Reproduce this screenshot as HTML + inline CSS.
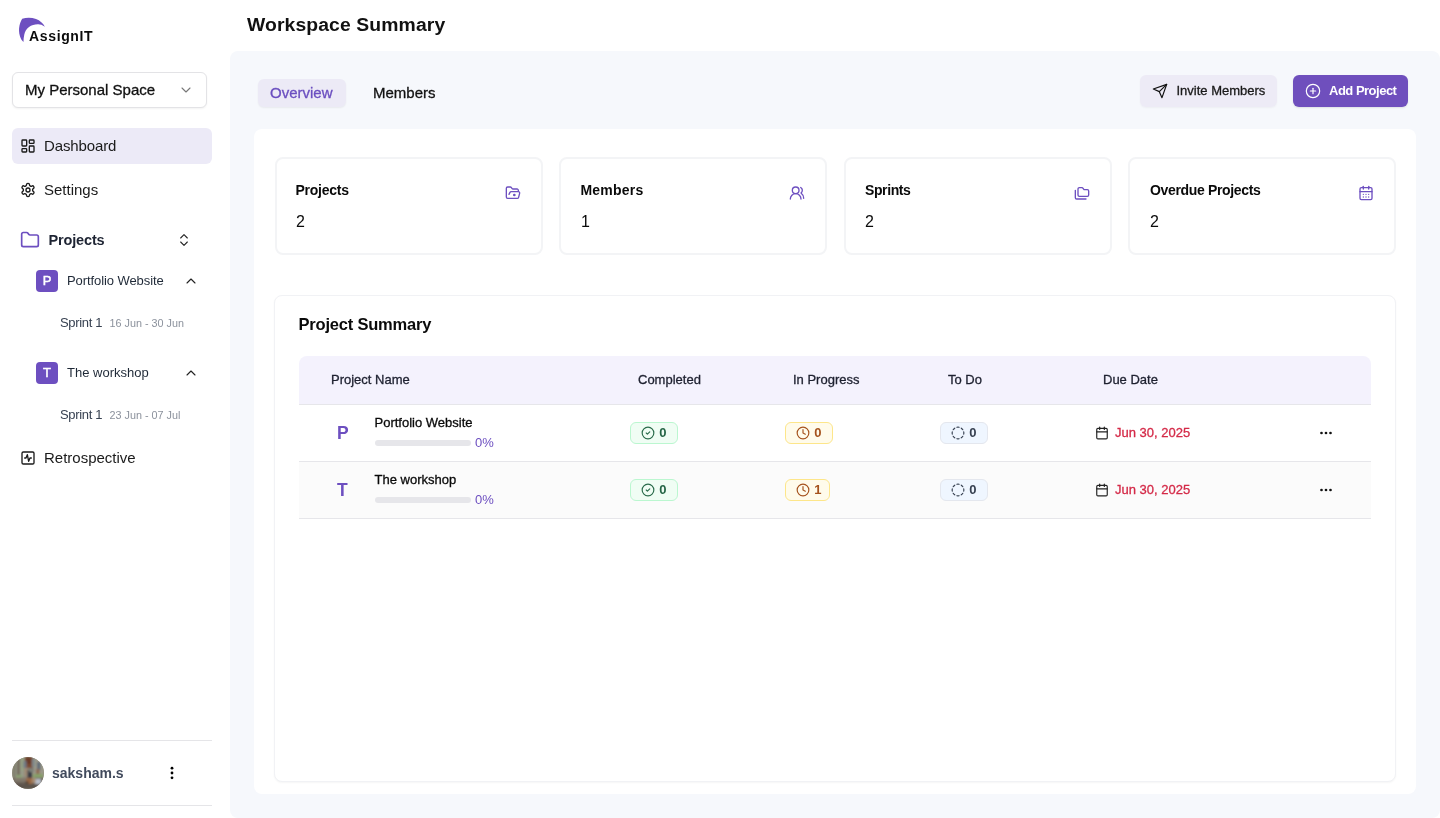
<!DOCTYPE html>
<html lang="en">
<head>
<meta charset="utf-8">
<title>Workspace Summary</title>
<style>
*{box-sizing:border-box;margin:0;padding:0}
html,body{width:1440px;height:818px;overflow:hidden;background:#fff;font-family:"Liberation Sans",sans-serif;color:#0a0a0a}
.abs{position:absolute}
#sidebar{will-change:transform;position:absolute;left:0;top:0;width:230px;height:818px;background:#fff}
#main{position:absolute;left:230px;top:51px;width:1210px;height:767px;background:#f6f8fc;border-radius:8px}
#title{will-change:transform;position:absolute;left:246.5px;top:12.5px;font-size:18px;letter-spacing:0.1px;transform:scaleX(1.075);transform-origin:0 0;font-weight:700;line-height:24px;color:#111;white-space:nowrap}
svg{display:block}
.t{position:absolute;white-space:nowrap;line-height:1}

.stat{top:157px;width:268px;height:98px;border:2px solid #f3f4f6;border-radius:8px;background:#fff}
.sl{top:183.15px;font-size:14px;font-weight:700;color:#0a0a0a}
.sv{top:214px;font-size:16px;color:#0a0a0a}
.ic{fill:none;stroke:#6d4fc0;stroke-width:2;stroke-linecap:round;stroke-linejoin:round}
.th{top:373px;font-size:13px;color:#1e2130}
.bdg{height:22px;border-radius:6px;border:1px solid}
.bi{fill:none;stroke-width:2;stroke-linecap:round;stroke-linejoin:round}
.bn{font-size:13px;font-weight:700}
.m{-webkit-text-stroke:0.3px currentColor}
</style>
</head>
<body>
<div id="sidebar">
  <!-- logo -->
  <svg class="abs" style="left:17px;top:16px" width="32" height="30" viewBox="0 0 32 30"><path d="M5.2 2.7C9.500 1.300 14.500 1.300 19 2.900C23 4.300 26.200 7.300 27.900 10.700C25.500 8.900 23 8.100 20.800 8.200C17.500 8.300 14.500 9.200 12 11C9.500 12.900 8 15.500 7.300 18.500C6.700 21 6.500 23.500 6.500 26C4.800 24.500 3.600 22.500 2.900 20C1.900 16.500 1.700 13 2.500 9.500C3 7 4 4.600 5.200 2.700Z" fill="#6d4fc0"/></svg>
  <div class="t" id="logotext" style="left:29px;top:28.6px;font-size:14px;font-weight:700;color:#0b0b0b;letter-spacing:0.65px">AssignIT</div>

  <!-- select -->
  <div class="abs" style="left:12px;top:72px;width:195px;height:36px;border:1px solid #e3e3e6;border-radius:6px;box-shadow:0 1px 2px rgba(0,0,0,.05);background:#fff"></div>
  <div class="t m" style="left:25px;top:82px;font-size:15px;color:#111">My Personal Space</div>
  <svg class="abs" style="left:178px;top:82px" width="16" height="16" viewBox="0 0 24 24" fill="none" stroke="#777" stroke-width="1.600" stroke-linecap="round" stroke-linejoin="round"><path d="M6 9l6 6 6-6"/></svg>

  <!-- nav -->
  <div class="abs" style="left:12px;top:128px;width:200px;height:36px;border-radius:6px;background:#eceaf7"></div>
  <svg class="abs" style="left:20px;top:138px" width="16" height="16" viewBox="0 0 24 24" fill="none" stroke="#1a1a1a" stroke-width="2" stroke-linecap="round" stroke-linejoin="round"><rect x="3" y="3" width="7" height="9" rx="1"/><rect x="14" y="3" width="7" height="5" rx="1"/><rect x="14" y="12" width="7" height="9" rx="1"/><rect x="3" y="16" width="7" height="5" rx="1"/></svg>
  <div class="t" style="left:44px;top:138px;font-size:15px;letter-spacing:-0.12px;color:#1a1a1a">Dashboard</div>

  <svg class="abs" style="left:20px;top:182px" width="16" height="16" viewBox="0 0 24 24" fill="none" stroke="#1a1a1a" stroke-width="2" stroke-linecap="round" stroke-linejoin="round"><path d="M12.22 2h-.44a2 2 0 0 0-2 2v.18a2 2 0 0 1-1 1.73l-.43.25a2 2 0 0 1-2 0l-.15-.08a2 2 0 0 0-2.73.73l-.22.38a2 2 0 0 0 .73 2.73l.15.1a2 2 0 0 1 1 1.72v.51a2 2 0 0 1-1 1.74l-.15.09a2 2 0 0 0-.73 2.73l.22.38a2 2 0 0 0 2.73.73l.15-.08a2 2 0 0 1 2 0l.43.25a2 2 0 0 1 1 1.73V20a2 2 0 0 0 2 2h.44a2 2 0 0 0 2-2v-.18a2 2 0 0 1 1-1.73l.43-.25a2 2 0 0 1 2 0l.15.08a2 2 0 0 0 2.73-.73l.22-.39a2 2 0 0 0-.73-2.73l-.15-.08a2 2 0 0 1-1-1.74v-.5a2 2 0 0 1 1-1.74l.15-.09a2 2 0 0 0 .73-2.73l-.22-.38a2 2 0 0 0-2.73-.73l-.15.08a2 2 0 0 1-2 0l-.43-.25a2 2 0 0 1-1-1.73V4a2 2 0 0 0-2-2z"/><circle cx="12" cy="12" r="3"/></svg>
  <div class="t" style="left:44px;top:182px;font-size:15px;color:#1a1a1a">Settings</div>

  <!-- projects -->
  <svg class="abs" style="left:20px;top:230px" width="20" height="20" viewBox="0 0 24 24" fill="none" stroke="#6d4fc0" stroke-width="2" stroke-linecap="round" stroke-linejoin="round"><path d="M20 20a2 2 0 0 0 2-2V8a2 2 0 0 0-2-2h-7.9a2 2 0 0 1-1.69-.9L9.6 3.9A2 2 0 0 0 7.93 3H4a2 2 0 0 0-2 2v13a2 2 0 0 0 2 2Z"/></svg>
  <div class="t" style="left:48.5px;top:232.5px;font-size:14.5px;letter-spacing:-0.15px;font-weight:700;color:#1e2433">Projects</div>
  <svg class="abs" style="left:176px;top:232px" width="16" height="16" viewBox="0 0 24 24" fill="none" stroke="#222" stroke-width="1.6" stroke-linecap="round" stroke-linejoin="round"><path d="M7 15l5 5 5-5"/><path d="M7 9l5-5 5 5"/></svg>

  <div class="abs" style="left:36px;top:270px;width:22px;height:22px;border-radius:4px;background:#6d4fc0"></div>
  <div class="t" style="left:36px;top:274px;width:22px;text-align:center;font-size:13px;-webkit-text-stroke:0.45px #fff;color:#fff">P</div>
  <div class="t" style="left:67px;top:274px;font-size:13px;letter-spacing:-0.08px;color:#1f2937">Portfolio Website</div>
  <svg class="abs" style="left:183px;top:273px" width="16" height="16" viewBox="0 0 24 24" fill="none" stroke="#222" stroke-width="1.700" stroke-linecap="round" stroke-linejoin="round"><path d="M18 15l-6-6-6 6"/></svg>
  <div class="t" style="left:60px;top:316.0px;font-size:13px;letter-spacing:-0.32px;color:#374151">Sprint 1</div>
  <div class="t" style="left:109.5px;top:318px;font-size:10.8px;color:#8b919c">16 Jun - 30 Jun</div>

  <div class="abs" style="left:36px;top:362px;width:22px;height:22px;border-radius:4px;background:#6d4fc0"></div>
  <div class="t" style="left:36px;top:366px;width:22px;text-align:center;font-size:13px;-webkit-text-stroke:0.45px #fff;color:#fff">T</div>
  <div class="t" style="left:67px;top:366px;font-size:13px;color:#1f2937">The workshop</div>
  <svg class="abs" style="left:183px;top:365px" width="16" height="16" viewBox="0 0 24 24" fill="none" stroke="#222" stroke-width="1.700" stroke-linecap="round" stroke-linejoin="round"><path d="M18 15l-6-6-6 6"/></svg>
  <div class="t" style="left:60px;top:408px;font-size:13px;letter-spacing:-0.32px;color:#374151">Sprint 1</div>
  <div class="t" style="left:109.5px;top:410px;font-size:10.8px;color:#8b919c">23 Jun - 07 Jul</div>

  <svg class="abs" style="left:20px;top:450px" width="16" height="16" viewBox="0 0 24 24" fill="none" stroke="#1a1a1a" stroke-width="2" stroke-linecap="round" stroke-linejoin="round"><rect x="3" y="3" width="18" height="18" rx="2"/><path d="M17 12h-2l-2 5-2-10-2 5H7"/></svg>
  <div class="t" style="left:44px;top:450px;font-size:15px;color:#1a1a1a">Retrospective</div>

  <!-- user -->
  <div class="abs" style="left:12px;top:740px;width:200px;height:1px;background:#e5e5e8"></div>
  <div class="abs" style="left:12px;top:805px;width:200px;height:1px;background:#e5e5e8"></div>
  <svg class="abs" id="avatar" style="left:12px;top:757px" width="32" height="32" viewBox="0 0 32 32">
    <defs><clipPath id="avc"><circle cx="16" cy="16" r="16"/></clipPath><filter id="avb" x="-20%" y="-20%" width="140%" height="140%"><feGaussianBlur stdDeviation="1.1"/></filter></defs>
    <g clip-path="url(#avc)"><rect width="32" height="32" fill="#8f8a7a"/><g filter="url(#avb)">
      <rect x="0" y="0" width="12" height="20" fill="#979a88"/>
      <rect x="5" y="2" width="3" height="18" fill="#736b5c"/>
      <rect x="1" y="6" width="2.500" height="14" fill="#7d7868"/>
      <rect x="9" y="0" width="3" height="14" fill="#94a082"/>
      <rect x="21" y="0" width="11" height="20" fill="#9c9a8a"/>
      <rect x="13" y="0" width="8" height="11" fill="#7b4b33"/>
      <rect x="14" y="0" width="5" height="7" fill="#6b3a25"/>
      <rect x="11.500" y="4" width="3" height="7" fill="#6f7a88"/>
      <rect x="20" y="2" width="3" height="8" fill="#7f8a8c"/>
      <rect x="25" y="5" width="3.500" height="8" fill="#5d6b78"/>
      <rect x="12.500" y="11" width="3" height="8" fill="#a08a74"/>
      <rect x="24" y="12" width="3.500" height="7" fill="#8d6b52"/>
      <rect x="15.500" y="13" width="4.500" height="8" fill="#3b3e44"/>
      <rect x="17" y="11" width="5" height="4" fill="#7d8078"/>
      <rect x="21" y="17" width="10" height="3.500" fill="#86a068"/>
      <rect x="4" y="18" width="6" height="2.500" fill="#8aa272"/>
      <rect x="0" y="21" width="32" height="11" fill="#675d54"/>
      <rect x="2" y="21" width="12" height="4" fill="#80776b"/>
      <rect x="14" y="21" width="6" height="6" fill="#9a6945"/>
      <rect x="13.500" y="24" width="3" height="3" fill="#5a4638"/>
      <rect x="23" y="22" width="6" height="5" fill="#b9bfca"/>
      <rect x="20" y="21" width="3.500" height="5" fill="#a58a70"/>
      <rect x="6" y="27" width="20" height="5" fill="#5c534b"/>
    </g></g></svg>
  <div class="t" style="left:52px;top:766.3px;font-size:14px;font-weight:700;color:#414a5c">saksham.s</div>
  <svg class="abs" style="left:164px;top:765px" width="16" height="16" viewBox="0 0 24 24" fill="#000"><circle cx="12" cy="4.700" r="2.100"/><circle cx="12" cy="12" r="2.100"/><circle cx="12" cy="19.300" r="2.100"/></svg>
</div>

<div id="title">Workspace Summary</div>

<div id="main">
</div>
<div id="content" style="will-change:transform;position:absolute;left:0;top:0;width:1440px;height:818px">
  <!-- tabs -->
  <div class="abs" style="left:258px;top:79px;width:88px;height:28px;border-radius:6px;background:#eceaf6;box-shadow:0 1px 2px rgba(0,0,0,.06)"></div>
  <div class="t m" id="tab1" style="left:270px;top:85px;font-size:15px;color:#6b4fc0">Overview</div>
  <div class="t m" id="tab2" style="left:373px;top:85px;font-size:15px;color:#111">Members</div>

  <!-- buttons -->
  <div class="abs" style="left:1140px;top:75px;width:137px;height:32px;border-radius:6px;background:#edebf6;box-shadow:0 1px 2px rgba(0,0,0,.04)"></div>
  <svg class="abs" style="left:1152px;top:83px" width="16" height="16" viewBox="0 0 24 24" fill="none" stroke="#111" stroke-width="1.8" stroke-linecap="round" stroke-linejoin="round"><path d="M22 2L11 13"/><path d="M22 2l-7 20-4-9-9-4 20-7z"/></svg>
  <div class="t m" id="btn1" style="left:1176.5px;top:84px;font-size:13px;color:#1a1a1a">Invite Members</div>
  <div class="abs" style="left:1293px;top:75px;width:115px;height:32px;border-radius:6px;background:#6f4fbd;box-shadow:0 1px 2px rgba(0,0,0,.1)"></div>
  <svg class="abs" style="left:1305px;top:83px" width="16" height="16" viewBox="0 0 24 24" fill="none" stroke="#fff" stroke-width="1.8" stroke-linecap="round" stroke-linejoin="round"><circle cx="12" cy="12" r="10"/><path d="M8 12h8"/><path d="M12 8v8"/></svg>
  <div class="t" id="btn2" style="left:1329px;top:84px;font-size:13px;letter-spacing:-0.5px;font-weight:700;color:#fff">Add Project</div>

  <!-- white card -->
  <div class="abs" style="left:254px;top:129px;width:1162px;height:665px;border-radius:8px;background:#fff"></div>

  <!-- stat cards -->
  <div class="abs stat" style="left:275px"></div>
  <div class="abs stat" style="left:559px"></div>
  <div class="abs stat" style="left:844px"></div>
  <div class="abs stat" style="left:1128px"></div>

  <div class="t sl" style="left:295.5px;letter-spacing:-0.26px">Projects</div><div class="t sv" style="left:296px">2</div>
  <div class="t sl" style="left:580.5px;letter-spacing:0.2px">Members</div><div class="t sv" style="left:581px">1</div>
  <div class="t sl" style="left:865px;letter-spacing:-0.4px">Sprints</div><div class="t sv" style="left:865px">2</div>
  <div class="t sl" style="left:1150px;letter-spacing:-0.34px">Overdue Projects</div><div class="t sv" style="left:1150px">2</div>

  <svg class="abs ic" style="left:505px;top:185px" width="16" height="16" viewBox="0 0 24 24"><path d="m6 14 1.450-2.900A2 2 0 0 1 9.240 10H20a2 2 0 0 1 1.940 2.500l-1.550 6a2 2 0 0 1-1.940 1.500H4a2 2 0 0 1-2-2V5c0-1.100.9-2 2-2h3.930a2 2 0 0 1 1.660.9l.82 1.200a2 2 0 0 0 1.660.9H18a2 2 0 0 1 2 2v2"/><circle cx="14" cy="15" r="1" fill="#6d4fc0"/></svg>
  <svg class="abs ic" style="left:789px;top:185px" width="16" height="16" viewBox="0 0 24 24"><path d="M18 21a8 8 0 0 0-16 0"/><circle cx="10" cy="8" r="5"/><path d="M22 20c0-3.370-2-6.500-4-8a5 5 0 0 0-.45-8.300"/></svg>
  <svg class="abs ic" style="left:1074px;top:185px" width="16" height="16" viewBox="0 0 24 24"><path d="M20 17a2 2 0 0 0 2-2V9a2 2 0 0 0-2-2h-3.900a2 2 0 0 1-1.690-.9l-.81-1.200a2 2 0 0 0-1.670-.9H8a2 2 0 0 0-2 2v9a2 2 0 0 0 2 2Z"/><path d="M2 8v11a2 2 0 0 0 2 2h14"/></svg>
  <svg class="abs ic" style="left:1358px;top:185px" width="16" height="16" viewBox="0 0 24 24"><path d="M8 2v4"/><path d="M16 2v4"/><rect x="3" y="4" width="18" height="18" rx="2"/><path d="M3 10h18"/><path d="M8 14h.01"/><path d="M12 14h.01"/><path d="M16 14h.01"/><path d="M8 18h.01"/><path d="M12 18h.01"/><path d="M16 18h.01"/></svg>

  <!-- project summary card -->
  <div class="abs" style="left:274px;top:295px;width:1122px;height:487px;border:1px solid #f1f2f5;border-radius:8px;background:#fff;box-shadow:0 1px 2px rgba(0,0,0,.04)"></div>
  <div class="t" id="ps" style="left:298.5px;top:316.2px;font-size:16.5px;letter-spacing:-0.2px;font-weight:700;color:#0a0a0a">Project Summary</div>

  <div class="abs" style="left:299px;top:356px;width:1072px;height:49px;background:#f4f2fd;border-radius:8px 8px 0 0;border-bottom:1px solid #e6e6ea"></div>
  <div class="t m th" style="left:331px">Project Name</div>
  <div class="t m th" style="left:638px">Completed</div>
  <div class="t m th" style="left:793px">In Progress</div>
  <div class="t m th" style="left:948px">To Do</div>
  <div class="t m th" style="left:1103px">Due Date</div>

  <div class="abs" style="left:299px;top:405px;width:1072px;height:57px;background:#fff;border-bottom:1px solid #e6e6ea"></div>
  <div class="abs" style="left:299px;top:462px;width:1072px;height:57px;background:#fbfbfb;border-bottom:1px solid #e6e6ea"></div>

  <div class="t" style="left:337px;top:424.8px;font-size:17.5px;font-weight:700;color:#6d4fc0">P</div>
  <div class="t m pn" style="left:374.5px;top:416px;font-size:13px;color:#0a0a0a">Portfolio Website</div>
  <div class="abs" style="left:375px;top:440px;width:96px;height:6px;border-radius:3px;background:#e6e6ea"></div>
  <div class="t" style="left:475px;top:436px;font-size:13px;color:#6d4fc0">0%</div>

  <div class="abs bdg" style="left:630px;top:422px;width:48px;background:#f0fdf4;border-color:#bbf7d0"></div>
  <svg class="abs bi" style="left:641px;top:426px;stroke:#2a6b4b" width="14" height="14" viewBox="0 0 24 24"><circle cx="12" cy="12" r="10"/><path d="m9 12 2 2 4-4"/></svg>
  <div class="t bn" style="left:659.3px;top:426px;color:#256546">0</div>

  <div class="abs bdg" style="left:785px;top:422px;width:48px;background:#fffbeb;border-color:#fde68a"></div>
  <svg class="abs bi" style="left:796px;top:426px;stroke:#a5521d" width="14" height="14" viewBox="0 0 24 24"><circle cx="12" cy="12" r="10"/><path d="M12 6v6l4 2"/></svg>
  <div class="t bn" style="left:814.3px;top:426px;color:#a5521d">0</div>

  <div class="abs bdg" style="left:940px;top:422px;width:48px;background:#eff6ff;border-color:#e4e7ee"></div>
  <svg class="abs bi" style="left:951px;top:426px;stroke:#374151" width="14" height="14" viewBox="0 0 24 24"><path d="M10.100 2.182a10 10 0 0 1 3.800 0"/><path d="M13.900 21.818a10 10 0 0 1-3.800 0"/><path d="M17.609 3.721a10 10 0 0 1 2.690 2.700"/><path d="M2.182 13.900a10 10 0 0 1 0-3.800"/><path d="M20.279 17.609a10 10 0 0 1-2.700 2.690"/><path d="M21.818 10.100a10 10 0 0 1 0 3.800"/><path d="M3.721 6.391a10 10 0 0 1 2.700-2.690"/><path d="M6.391 20.279a10 10 0 0 1-2.690-2.700"/></svg>
  <div class="t bn" style="left:969.3px;top:426px;color:#374151">0</div>

  <svg class="abs" style="left:1095px;top:426px" width="14" height="14" viewBox="0 0 24 24" fill="none" stroke="#222" stroke-width="2" stroke-linecap="round" stroke-linejoin="round"><path d="M8 2v4"/><path d="M16 2v4"/><rect x="3" y="4" width="18" height="18" rx="2"/><path d="M3 10h18"/></svg>
  <div class="t m dt" style="left:1115px;top:426.3px;font-size:13px;color:#d42a48">Jun 30, 2025</div>
  <svg class="abs" style="left:1318px;top:425px" width="16" height="16" viewBox="0 0 16 16" fill="#111"><circle cx="3.500" cy="8" r="1.350"/><circle cx="8" cy="8" r="1.350"/><circle cx="12.500" cy="8" r="1.350"/></svg>

  <div class="t" style="left:337px;top:481.8px;font-size:17.5px;font-weight:700;color:#6d4fc0">T</div>
  <div class="t m pn" style="left:374.5px;top:473px;font-size:13px;color:#0a0a0a">The workshop</div>
  <div class="abs" style="left:375px;top:497px;width:96px;height:6px;border-radius:3px;background:#e6e6ea"></div>
  <div class="t" style="left:475px;top:493px;font-size:13px;color:#6d4fc0">0%</div>

  <div class="abs bdg" style="left:630px;top:479px;width:48px;background:#f0fdf4;border-color:#bbf7d0"></div>
  <svg class="abs bi" style="left:641px;top:483px;stroke:#2a6b4b" width="14" height="14" viewBox="0 0 24 24"><circle cx="12" cy="12" r="10"/><path d="m9 12 2 2 4-4"/></svg>
  <div class="t bn" style="left:659.3px;top:483px;color:#256546">0</div>

  <div class="abs bdg" style="left:785px;top:479px;width:45px;background:#fffbeb;border-color:#fde68a"></div>
  <svg class="abs bi" style="left:796px;top:483px;stroke:#a5521d" width="14" height="14" viewBox="0 0 24 24"><circle cx="12" cy="12" r="10"/><path d="M12 6v6l4 2"/></svg>
  <div class="t bn" style="left:814.3px;top:483px;color:#a5521d">1</div>

  <div class="abs bdg" style="left:940px;top:479px;width:48px;background:#eff6ff;border-color:#e4e7ee"></div>
  <svg class="abs bi" style="left:951px;top:483px;stroke:#374151" width="14" height="14" viewBox="0 0 24 24"><path d="M10.100 2.182a10 10 0 0 1 3.800 0"/><path d="M13.900 21.818a10 10 0 0 1-3.800 0"/><path d="M17.609 3.721a10 10 0 0 1 2.690 2.700"/><path d="M2.182 13.900a10 10 0 0 1 0-3.800"/><path d="M20.279 17.609a10 10 0 0 1-2.700 2.690"/><path d="M21.818 10.100a10 10 0 0 1 0 3.800"/><path d="M3.721 6.391a10 10 0 0 1 2.700-2.690"/><path d="M6.391 20.279a10 10 0 0 1-2.690-2.700"/></svg>
  <div class="t bn" style="left:969.3px;top:483px;color:#374151">0</div>

  <svg class="abs" style="left:1095px;top:483px" width="14" height="14" viewBox="0 0 24 24" fill="none" stroke="#222" stroke-width="2" stroke-linecap="round" stroke-linejoin="round"><path d="M8 2v4"/><path d="M16 2v4"/><rect x="3" y="4" width="18" height="18" rx="2"/><path d="M3 10h18"/></svg>
  <div class="t m dt" style="left:1115px;top:483.3px;font-size:13px;color:#d42a48">Jun 30, 2025</div>
  <svg class="abs" style="left:1318px;top:482px" width="16" height="16" viewBox="0 0 16 16" fill="#111"><circle cx="3.500" cy="8" r="1.350"/><circle cx="8" cy="8" r="1.350"/><circle cx="12.500" cy="8" r="1.350"/></svg>
</div>

</body>
</html>
